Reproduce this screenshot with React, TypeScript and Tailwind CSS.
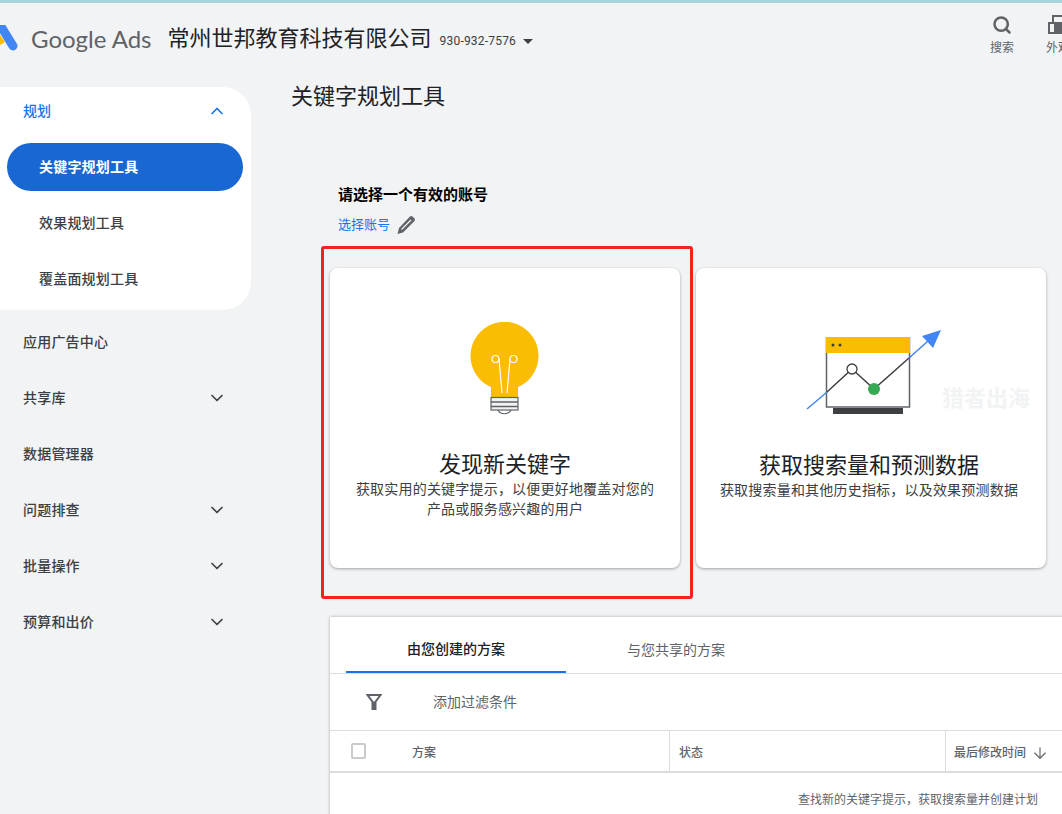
import { ChevronDown, ChevronUp, ArrowDown, Search } from "lucide-react"

const cjk = "font-['Roboto','Noto_Sans_CJK_SC',sans-serif]"

function Bulb() {
  return (
    <svg width="70" height="96" viewBox="0 0 70 96">
      <path d="M21 65 A34 34 0 1 1 48 65 V75 H21 Z" fill="#fbbc04" />
      <g fill="none" stroke="#fff" strokeWidth="1.200">
        <circle cx="25.500" cy="37" r="3.500" />
        <circle cx="43.500" cy="37" r="3.500" />
        <path d="M29 37 L32 71 M40 37 L37 71" />
      </g>
      <rect x="21" y="75.500" width="27" height="12.500" fill="#f1f3f4" stroke="#5f6368" strokeWidth="1.200" />
      <path d="M21 80 H48 M21 84.500 H48" stroke="#5f6368" strokeWidth="1.400" />
      <path d="M28 88 C30 93 39 93 41 88" fill="none" stroke="#5f6368" strokeWidth="1.200" />
    </svg>
  )
}

function ChartArt() {
  return (
    <svg width="140" height="88" viewBox="0 0 140 88">
      <rect x="24.500" y="8" width="83" height="69" fill="#fff" stroke="#5f6368" strokeWidth="1.500" />
      <rect x="31" y="78" width="70" height="6" fill="#3c4043" />
      <rect x="24" y="7" width="84" height="16" fill="#fbbc04" />
      <circle cx="31" cy="15" r="1.500" fill="#3c4043" />
      <circle cx="38" cy="15" r="1.500" fill="#3c4043" />
      <path d="M5 79 L25 62 M107 28 L126 11" stroke="#4285f4" strokeWidth="1.500" />
      <path d="M25 62 L50 39 L72 59 L107 28" fill="none" stroke="#3c4043" strokeWidth="1.500" />
      <path d="M139 0 L120 6 L131 18 Z" fill="#4285f4" />
      <circle cx="50" cy="39" r="5" fill="#fff" stroke="#3c4043" strokeWidth="1.300" />
      <circle cx="72" cy="59" r="6" fill="#34a853" />
    </svg>
  )
}

function NavItem({ label, chevron }: { label: string; chevron?: boolean }) {
  return (
    <div className="flex h-14 items-center justify-between pl-[23px] pr-[24px] text-[14px] font-medium tracking-[0.2px] text-[#3c4043]">
      <span>{label}</span>
      {chevron && <ChevronDown className="h-5 w-5 text-[#3c4043]" />}
    </div>
  )
}

export default function App() {
  return (
    <div className={`h-[814px] w-[1062px] overflow-hidden bg-[#f1f3f4] relative ${cjk}`}>
      <div className="h-[3px] bg-[#a9d6da]" />

      {/* Header */}
      <header className="flex h-[84px] items-start justify-between">
        <div className="flex items-center pt-[18px]">
          <svg width="20" height="28" viewBox="0 0 20 28" className="shrink-0">
            <path d="M2 3 L13 21" stroke="#4285f4" strokeWidth="9" strokeLinecap="round" />
            <path d="M0 20 L0 10 L5 17 Z" fill="#fbbc04" />
          </svg>
          <span className="ml-[11px] text-[24px] leading-9 text-[#5f6368] font-['Lato',sans-serif]">Google Ads</span>
          <span className="ml-[16px] text-[22px] leading-9 text-[#202124]">常州世邦教育科技有限公司</span>
          <span className="ml-2 pt-1 text-[12px] tracking-[0.2px] text-[#3c4043]">930-932-7576</span>
          <span className="ml-[7px] mt-1 h-0 w-0 border-x-[5px] border-t-[5px] border-x-transparent border-t-[#3c4043]" />
        </div>
        <div className="flex pt-[11px]">
          <div className="flex w-12 flex-col items-center text-[12px] text-[#5f6368]">
            <Search className="mt-px h-5 w-5" strokeWidth={3} />
            <span className="mt-1">搜索</span>
          </div>
          <div className="flex w-9 flex-col pl-5 text-[12px] text-[#5f6368] whitespace-nowrap">
            <svg width="22" height="20" viewBox="0 0 22 20" className="ml-[2px] shrink-0">
              <path d="M0 8 H22 V20 H0 Z" fill="#5f6368" />
              <path d="M2 10 H6 V18 H2 Z" fill="#f1f3f4" />
              <path d="M5 8 V2 H20 V8" fill="none" stroke="#5f6368" strokeWidth="2" />
            </svg>
            <span className="mt-[5px]">外观</span>
          </div>
        </div>
      </header>

      <div className="flex">
        {/* Sidebar */}
        <aside className="w-[251px] shrink-0">
          <div className="rounded-r-[28px] bg-white pb-[3px]">
            <div className="flex h-12 items-center justify-between pl-[23px] pr-[24px] text-[14px] font-medium text-[#1a73e8]">
              <span>规划</span>
              <ChevronUp className="h-5 w-5" />
            </div>
            <div className="mb-1 ml-[7px] mr-[8px] mt-2 flex h-12 items-center rounded-full bg-[#1967d2] pl-8 text-[14px] font-bold tracking-[0.2px] text-white">
              关键字规划工具
            </div>
            <div className="flex h-14 items-center pl-[39px] text-[14px] font-medium tracking-[0.2px] text-[#3c4043]">效果规划工具</div>
            <div className="flex h-14 items-center pl-[39px] text-[14px] font-medium tracking-[0.2px] text-[#3c4043]">覆盖面规划工具</div>
          </div>
          <div className="pt-1">
            <NavItem label="应用广告中心" />
            <NavItem label="共享库" chevron />
            <NavItem label="数据管理器" />
            <NavItem label="问题排查" chevron />
            <NavItem label="批量操作" chevron />
            <NavItem label="预算和出价" chevron />
          </div>
        </aside>

        {/* Main */}
        <main className="min-w-0 flex-1">
          <h1 className="pl-10 pt-px text-[22px] leading-[18px] text-[#202124]">关键字规划工具</h1>

          <div className="pl-[79px]">
            <div className="pl-2 pt-[79px]">
              <div className="text-[15px] font-bold leading-5 text-black">请选择一个有效的账号</div>
              <div className="mt-[10px] flex items-center gap-[6px] text-[13px] leading-5 text-[#1a73e8]">
                <span>选择账号</span>
                <svg width="20" height="20" viewBox="0 0 20 20">
                  <path d="M14 1.500 Q15.500 0.500 17 2 L18.500 3.500 Q19.500 5 18.500 6 L7 17.500 L1.500 19 L3 13 Z" fill="#5f6368" />
                  <path d="M5.500 14.500 L15 5" stroke="#f1f3f4" strokeWidth="1.300" />
                </svg>
              </div>
            </div>

            <div className="mt-[33px] flex gap-4">
              <div className="flex h-[300px] w-[350px] flex-col items-center rounded-lg bg-white pt-[54px] shadow-[0_1px_3px_rgba(60,64,67,0.45)]">
                <Bulb />
                <h2 className="mt-[33px] text-[22px] leading-7 text-[#202124]">发现新关键字</h2>
                <p className="w-[300px] text-center text-[14px] leading-5 tracking-[0.2px] text-[#3c4043]">
                  获取实用的关键字提示，以便更好地覆盖对您的产品或服务感兴趣的用户
                </p>
              </div>
              <div className="relative flex h-[300px] w-[350px] flex-col items-center rounded-lg bg-white pr-1 pt-[62px] shadow-[0_1px_3px_rgba(60,64,67,0.45)]">
                <div className="ml-[5px]">
                  <ChartArt />
                </div>
                <h2 className="mt-[34px] text-[22px] leading-7 text-[#202124]">获取搜索量和预测数据</h2>
                <p className="w-[310px] text-center text-[14px] leading-5 tracking-[0.2px] text-[#3c4043]">
                  获取搜索量和其他历史指标，以及效果预测数据
                </p>
                <span className="absolute left-[246px] top-[119px] text-[22px] font-bold leading-6 text-[#f1f3f4]">猎者出海</span>
              </div>
            </div>

            {/* Plans table */}
            <section className="mt-[49px] w-[760px] bg-white shadow-[0_0_3px_rgba(60,64,67,0.4)]">
              <div className="flex h-[57px] items-stretch border-b border-[#dadce0] pl-4 text-[14px]">
                <div className="flex w-[220px] items-center justify-center border-b-2 border-[#1a73e8] pt-[10px] font-medium text-[#202124]">由您创建的方案</div>
                <div className="flex w-[220px] items-center justify-center pt-[10px] text-[#5f6368]">与您共享的方案</div>
              </div>
              <div className="flex h-[57px] items-center border-b border-[#dadce0] text-[14px] text-[#5f6368]">
                <svg width="18" height="18" viewBox="0 0 18 18" className="ml-[35px]">
                  <path d="M0.500 1 H17.500 L11.500 9 V17 H6.500 V9 Z M4.500 3 L8.500 8.500 H9.500 L13.500 3 Z" fill="#5f6368" fillRule="evenodd" />
                </svg>
                <span className="ml-[50px] pt-px">添加过滤条件</span>
              </div>
              <div className="flex h-[42px] items-stretch border-b-[2px] border-[#dadce0] text-[12px] font-medium text-[#5f6368]">
                <div className="flex w-[340px] items-center border-r border-[#dadce0] pl-[21px]">
                  <span className="h-4 w-[15px] rounded-[2px] border-2 border-[#c8cacc]" />
                  <span className="ml-[46px] pt-[3px]">方案</span>
                </div>
                <div className="flex w-[276px] items-center border-r border-[#dadce0] pl-[9px] pt-[3px]">状态</div>
                <div className="flex items-center gap-[5px] pl-2 pt-[3px]">
                  <span>最后修改时间</span>
                  <ArrowDown className="h-[18px] w-[18px] text-[#5f6368]" strokeWidth={1.500} />
                </div>
              </div>
              <div className="h-[60px] pl-[468px] pt-[17px] text-[12px] leading-5 text-[#5f6368]">
                查找新的关键字提示，获取搜索量并创建计划
              </div>
            </section>
          </div>
        </main>
      </div>

      {/* red annotation around the first card */}
      <div className="absolute left-[321px] top-[246px] h-[353px] w-[372px] rounded-[3px] border-[3px] border-[#f5221b]" />
    </div>
  )
}
